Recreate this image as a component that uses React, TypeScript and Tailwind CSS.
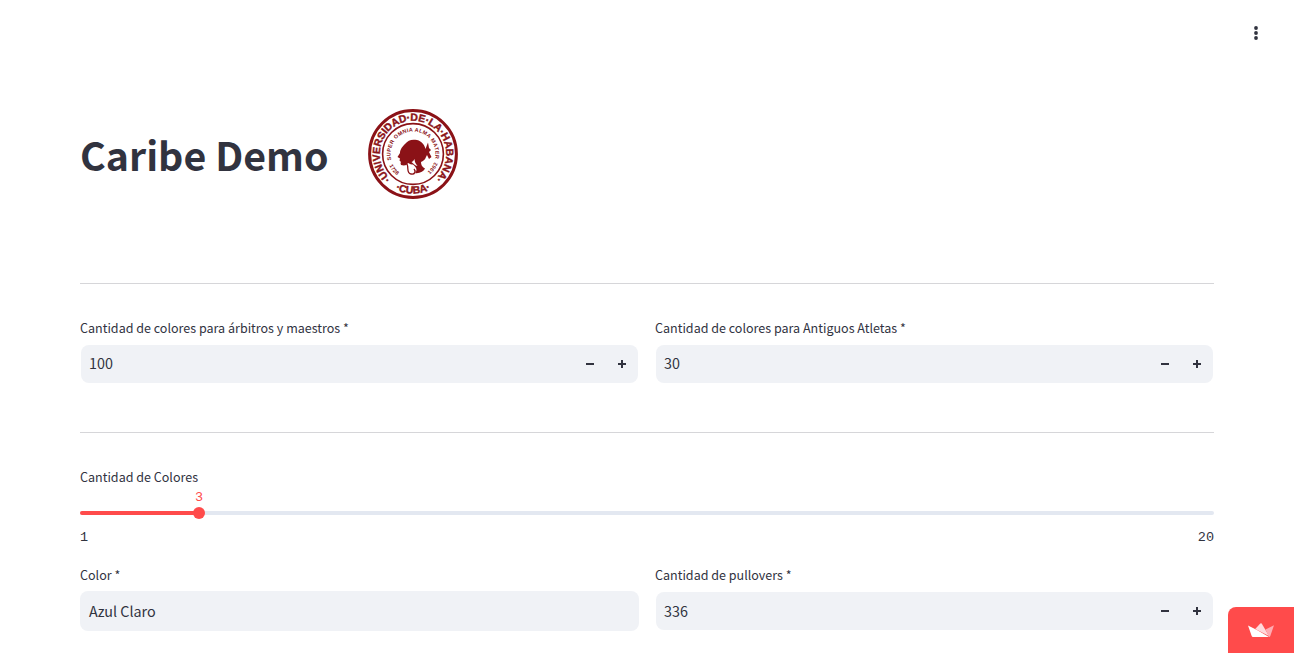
import { useState } from 'react';

const maroon = '#8b1217';

function Seal() {
  return (
    <svg viewBox="-45 -45 90 90" className="size-[90px]" fill={maroon}>
      <defs>
        <path id="outer" d="M0 33.2A33.2 33.2 0 0 1 0-33.2A33.2 33.2 0 0 1 0 33.2" />
        <path id="outerLow" d="M-39.6 0A39.6 39.6 0 0 0 39.6 0" />
        <path id="inner" d="M0 22.5A22.5 22.5 0 0 1 0-22.5A22.5 22.5 0 0 1 0 22.5" />
        <path id="innerLow" d="M-26.5 0A26.5 26.5 0 0 0 26.5 0" />
      </defs>
      <circle r="43.4" fill="#fff" stroke={maroon} strokeWidth="3" />
      <circle r="30.4" fill="none" stroke={maroon} strokeWidth="1.6" />
      <g fontFamily="'Liberation Sans', sans-serif" fontWeight="700">
        <g fontSize="10.4" stroke={maroon} strokeWidth="0.4">
          <text textAnchor="middle">
            <textPath href="#outer" startOffset="50%" textLength="160">·UNIVERSIDAD·DE·LA·HABANA·</textPath>
          </text>
          <text textAnchor="middle">
            <textPath href="#outerLow" startOffset="50%">·CUBA·</textPath>
          </text>
        </g>
        <text fontSize="5.4" textAnchor="middle">
          <textPath href="#inner" startOffset="49.5%" textLength="81">SUPER OMNIA ALMA MATER</textPath>
        </text>
        <text fontSize="5.4" textAnchor="middle">
          <textPath href="#innerLow" startOffset="22%" textLength="12.5">1728</textPath>
        </text>
        <text fontSize="5.4" textAnchor="middle">
          <textPath href="#innerLow" startOffset="80%" textLength="13.5">1962</textPath>
        </text>
      </g>
      <path d="M-13-1C-13-5-10-8-8-10C-5-14-1-15 4-14C9-13 12-8 12.5-5L14-9L15-11.5L16-6L18-4L16-2L18.5 3L16 5L14 1L13 3C12 6 10 7 8 8C8 11 9 13 12 14.5C11 17 6 20 2 19C5 16 3 13 0 10.5C-3 11-4 9-5 9C-6 11.5-9 12-12 11L-12.5 9L-12 8L-13.5 6.5L-13 4.5L-15.5 3Z" />
      <path d="M-6 10C-4 14-7 19-2 20C2 21 3 17 1 15" fill="none" stroke={maroon} strokeWidth="1.3" />
      <path d="M-1.5 8C0 7.5 1 6 1.5 5C1.5 8 3 10 4.5 12C2 11.5.5 9.5-1.5 8Z" fill="#fff" />
    </svg>
  );
}

function Label({ children }: { children: string }) {
  return <label className="block h-6 text-[12.54px] leading-6 whitespace-nowrap">{children}</label>;
}

function NumberField({ label, initial, raised = false }: { label: string; initial: number; raised?: boolean }) {
  const [value, setValue] = useState(initial);
  return (
    <div className="flex-1">
      <Label>{label}</Label>
      <div className="mx-px mt-[5px] flex h-[38px] items-center rounded-lg bg-[#f0f2f6] pl-2">
        <span className={`flex-1 text-[14.33px] leading-6 ${raised ? 'pb-0.5' : ''}`}>{value}</span>
        <button aria-label="−" onClick={() => setValue(value - 1)} className="flex h-full w-8 items-center justify-center">
          <svg width="8" height="8" viewBox="0 0 8 8" fill="currentColor"><path d="M0 3h8v2H0z" /></svg>
        </button>
        <button aria-label="+" onClick={() => setValue(value + 1)} className="flex h-full w-8 items-center justify-center">
          <svg width="8" height="8" viewBox="0 0 8 8" fill="currentColor"><path d="M3 0h2v3h3v2H5v3H3V5H0V3h3z" /></svg>
        </button>
      </div>
    </div>
  );
}

export default function App() {
  return (
    <main className="relative h-[653px] overflow-hidden bg-white px-20 font-['Noto_Sans_CJK_SC',sans-serif] text-[#31333f]">
      <button aria-label="Menu" className="absolute top-[25px] right-[30px] flex size-4 items-center justify-center">
        <svg width="16" height="16" viewBox="0 0 16 16" fill="currentColor">
          <circle cx="8" cy="3" r="1.9" /><circle cx="8" cy="8" r="1.9" /><circle cx="8" cy="13" r="1.9" />
        </svg>
      </button>

      <header className="flex h-[283px] items-start pt-[109px]">
        <h1 className="mt-[18px] w-72 text-[39.3px] leading-[53px] font-bold whitespace-nowrap">Caribe Demo</h1>
        <Seal />
      </header>
      <hr className="border-[#d6d6d9]" />

      <section className="mt-8 flex gap-4">
        <NumberField label="Cantidad de colores para árbitros y maestros *" initial={100} raised />
        <NumberField label="Cantidad de colores para Antiguos Atletas *" initial={30} raised />
      </section>
      <hr className="mt-[49px] border-[#d6d6d9]" />

      <section className="mt-8">
        <Label>Cantidad de Colores</Label>
        <div className="mt-[22px] flex h-1 items-center rounded bg-[#e3e8f1]">
          <div className="h-1 w-[119px] rounded-l bg-[#ff4b4b]" />
          <div className="relative -ml-1.5 size-3 shrink-0 rounded-full bg-[#ff4b4b]">
            <span className="absolute -top-5 left-1/2 -translate-x-1/2 font-['Liberation_Mono',monospace] text-[13.5px] leading-[22px] text-[#ff4b4b]">3</span>
          </div>
        </div>
        <div className="mt-3 flex h-[22px] justify-between font-['Liberation_Mono',monospace] text-[13.5px] leading-[22px]">
          <span>1</span>
          <span>20</span>
        </div>
      </section>

      <section className="mt-3.5 flex gap-4">
        <div className="flex-1">
          <Label>Color *</Label>
          <div className="mt-1 flex h-10 items-center rounded-lg bg-[#f0f2f6] pl-[9px] text-[14.33px] leading-6">Azul Claro</div>
        </div>
        <NumberField label="Cantidad de pullovers *" initial={336} />
      </section>

      <div className="absolute right-0 bottom-0 flex h-[46px] w-[66px] items-center justify-center rounded-tl-lg bg-[#ff4b4b]">
        <svg width="26" height="14" viewBox="0 0 26 14">
          <path d="M0 2.4L9 7L21 14H5Q4 14 3.7 13Z" fill="#fff" />
          <path d="M7.2 6L12.3.4Q13 0 13.7.4L21 13Z" fill="#ffd9dc" />
          <path d="M17.5 6.5L26 2.3L22.3 13Q22 14 21 14Z" fill="#ffabb2" />
        </svg>
      </div>
    </main>
  );
}
